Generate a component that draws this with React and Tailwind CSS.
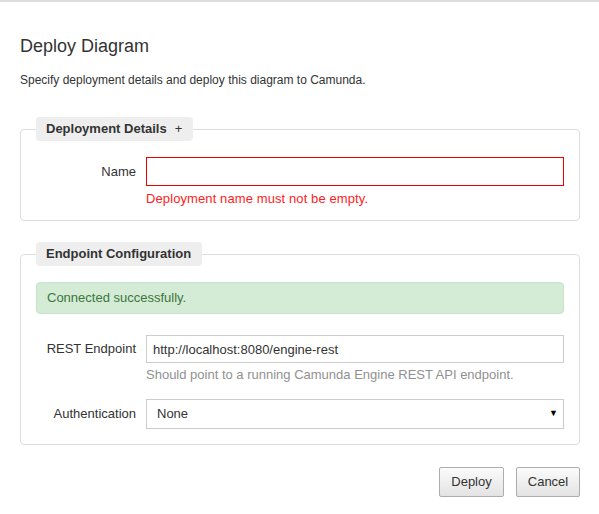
import React from 'react';

// --- Legend pill shown on top of each fieldset border ---
const Legend = ({ children }) => (
  <legend className="h-6 pl-[10px] pr-[11px] bg-[#eee] rounded-[4px] text-[13px] leading-6 font-bold text-[#333]">
    {children}
  </legend>
);

// --- Label / control row ---
const Row = ({ label, children }) => (
  <div className="grid grid-cols-[100px_1fr] gap-x-[10px]">
    <label className="flex items-center justify-end text-[13px] text-[#333]">{label}</label>
    {children}
  </div>
);

export default function App() {
  return (
    <div className="h-[514px] w-[599px] bg-white border-t-2 border-[#dcdcdc] pl-5 pr-[19px] font-['Liberation_Sans',Arial,sans-serif] text-[#333]">
      <h2 className="pt-[34px] text-[18px] leading-5 font-normal">Deploy Diagram</h2>
      <p className="mt-4 text-[12px] leading-4">
        Specify deployment details and deploy this diagram to Camunda.
      </p>

      {/* --- Deployment details --- */}
      <fieldset className="mt-[29px] border border-[#ddd] rounded-[4px] px-[15px] pt-4 pb-3">
        <Legend>
          Deployment Details<span className="ml-[8px] font-normal">+</span>
        </Legend>
        <Row label="Name">
          <input
            type="text"
            className="h-[29px] w-full border border-[#e00] px-[6px] text-[13px] outline-none"
          />
        </Row>
        <div className="grid grid-cols-[100px_1fr] gap-x-[10px]">
          <p className="col-start-2 mt-1 text-[13px] leading-[18px] tracking-[0.1px] text-[#f22]">
            Deployment name must not be empty.
          </p>
        </div>
      </fieldset>

      {/* --- Endpoint configuration --- */}
      <fieldset className="mt-[21px] border border-[#ddd] rounded-[4px] px-[15px] pt-4 pb-[15px]">
        <Legend>Endpoint Configuration</Legend>
        <div className="h-8 flex items-center px-[10px] border border-[#c6e4c9] bg-[#d4ebd6] rounded-[4px] text-[13px] text-[#3c763d]">
          Connected successfully.
        </div>

        <div className="mt-[21px]">
          <Row label="REST Endpoint">
            <input
              type="text"
              defaultValue="http://localhost:8080/engine-rest"
              className="h-[28px] w-full border border-[#ccc] px-[6px] text-[13px] text-[#333] outline-none"
            />
          </Row>
          <div className="grid grid-cols-[100px_1fr] gap-x-[10px]">
            <p className="col-start-2 mt-[3px] text-[13px] leading-[18px] text-[#919191]">
              Should point to a running Camunda Engine REST API endpoint.
            </p>
          </div>
        </div>

        <div className="mt-[15px]">
          <Row label="Authentication">
            <div className="relative">
              <select className="h-[30px] w-full appearance-none border border-[#ccc] bg-white pl-[10px] text-[13px] text-[#333] outline-none">
                <option>None</option>
              </select>
              <span className="pointer-events-none absolute right-[6px] top-[8px] text-[9px] text-black">▼</span>
            </div>
          </Row>
        </div>
      </fieldset>

      {/* --- Actions --- */}
      <div className="mt-[22px] flex justify-end gap-3">
        <button className="h-[30px] w-[65px] border border-[#adadad] rounded-[2px] bg-linear-to-b from-[#fbfbfb] to-[#e3e3e3] text-[13px] text-[#333]">
          Deploy
        </button>
        <button className="h-[30px] w-[64px] border border-[#adadad] rounded-[2px] bg-linear-to-b from-[#fbfbfb] to-[#e3e3e3] text-[13px] text-[#333]">
          Cancel
        </button>
      </div>
    </div>
  );
}
